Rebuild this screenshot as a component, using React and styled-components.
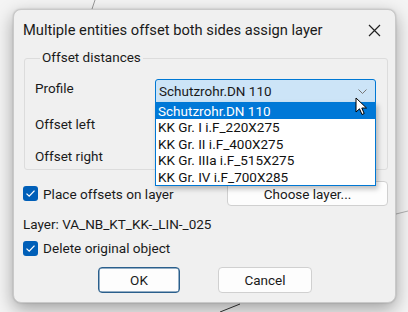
import React from "react";
import styled, { createGlobalStyle } from "styled-components";

const GlobalStyle = createGlobalStyle`
  html, body {
    margin: 0;
    padding: 0;
    background: #f4f4f4;
    font-family: Roboto, "Noto Sans", sans-serif;
    color: #1a1a1a;
  }
`;

const Page = styled.div`
  position: relative;
  width: 408px;
  height: 312px;
  overflow: hidden;
  padding: 9px 0 0 13px;
  box-sizing: border-box;
`;

const BackLines = styled.svg`
  position: absolute;
  left: 0;
  top: 0;
  pointer-events: none;
`;

const Dialog = styled.div`
  position: relative;
  width: 383px;
  height: 294px;
  box-sizing: border-box;
  background: #f0f0f0;
  border: 1px solid #c9c9c9;
  border-radius: 8px;
  box-shadow: 0 6px 18px rgba(0, 0, 0, 0.35), 0 0 2px rgba(0, 0, 0, 0.2);
  display: flex;
  flex-direction: column;
`;

const TitleBar = styled.div`
  height: 40px;
  display: flex;
  align-items: center;
  justify-content: space-between;
  padding: 0 14px 0 9px;
  font-size: 14.7px;
`;

const Body = styled.div`
  padding: 0 7px 0 9px;
  display: flex;
  flex-direction: column;
  font-size: 13.5px;
`;

const Group = styled.fieldset`
  margin: 0 0 0 1px;
  padding: 8px 0 0 10px;
  height: 120px;
  box-sizing: border-box;
  border: 1px solid #dcdcdc;
  border-radius: 3px;
  width: 364px;
`;

const Legend = styled.legend`
  padding: 0 2px;
  margin-left: 5px;
  font-size: 13.5px;
  position: relative;
  top: -1px;
`;

const FieldRow = styled.div`
  display: flex;
  align-items: center;
  height: 32px;
`;

const FieldLabel = styled.div`
  width: 120px;
  margin-top: ${(p) => p.$mt || 0}px;
`;

const Combo = styled.div`
  position: relative;
  width: 221px;
  height: 24px;
  margin-top: 2px;
  box-sizing: border-box;
  border: 1px solid #0078d4;
  border-radius: 3px 3px 0 0;
  background: #cce4f7;
  display: flex;
  align-items: center;
  justify-content: space-between;
  padding: 0 8px 0 3px;
`;

const DropList = styled.div`
  position: absolute;
  left: -1px;
  top: 22px;
  width: 221px;
  box-sizing: border-box;
  background: #fff;
  border: 1px solid #0078d4;
  box-shadow: 2px 3px 5px rgba(0, 0, 0, 0.25);
  z-index: 5;
`;

const DropItem = styled.div`
  height: 16.4px;
  line-height: 16.4px;
  overflow: hidden;
  padding-left: 2px;
  font-size: 13.5px;
  background: ${(p) => (p.$active ? "#0078d7" : "transparent")};
  color: ${(p) => (p.$active ? "#fff" : "#111")};
`;

const CheckRow = styled.div`
  display: flex;
  align-items: center;
  justify-content: space-between;
  margin-top: ${(p) => p.$mt || 0}px;
`;

const CheckLabel = styled.label`
  display: flex;
  align-items: center;
  gap: 5px;
  font-size: 13.6px;
`;

const Box = styled.span`
  width: 15px;
  height: 15px;
  border-radius: 3px;
  background: #005fb8;
  display: inline-flex;
  align-items: center;
  justify-content: center;
`;

const Button = styled.button`
  font-family: inherit;
  font-size: 13.5px;
  color: #1a1a1a;
  background: #fdfdfd;
  border: 1px solid ${(p) => (p.$default ? "#2a5f8c" : "#d0d0d0")};
  border-radius: 4px;
  height: ${(p) => p.$h || 25}px;
  width: ${(p) => p.$w}px;
  padding: 0;
  box-shadow: ${(p) => (p.$default ? "inset 0 0 0 0.5px #2a5f8c" : "none")};
`;

const InfoText = styled.div`
  margin-top: 10px;
  font-size: 13.5px;
`;

const ButtonBar = styled.div`
  display: flex;
  gap: 38px;
  margin: 11px 0 0 75px;
`;

const Cursor = styled.svg`
  position: absolute;
  left: 355px;
  top: 97px;
  z-index: 10;
`;

const Check = () => (
  <svg width="11" height="9" viewBox="0 0 11 9">
    <path d="M1.5 4.6 L4.2 7.2 L9.5 1.6" fill="none" stroke="#fff" strokeWidth="1.3" />
  </svg>
);

const profiles = [
  "Schutzrohr.DN 110",
  "KK Gr. I i.F_220X275",
  "KK Gr. II i.F_400X275",
  "KK Gr. IIIa i.F_515X275",
  "KK Gr. IV i.F_700X285",
];

export default function App() {
  return (
    <Page>
      <GlobalStyle />
      <BackLines width="408" height="312">
        <line x1="95" y1="0" x2="91" y2="12" stroke="#9a9a9a" strokeWidth="1" />
        <line x1="396" y1="214" x2="408" y2="211" stroke="#b0b0b0" strokeWidth="1" />
        <line x1="220" y1="312" x2="240" y2="304" stroke="#333" strokeWidth="1" />
      </BackLines>
      <Dialog>
        <TitleBar>
          <span>Multiple entities offset both sides assign layer</span>
          <svg width="13" height="13" viewBox="0 0 13 13">
            <path d="M1 1 L12 12 M12 1 L1 12" stroke="#222" strokeWidth="1.2" />
          </svg>
        </TitleBar>
        <Body>
          <Group>
            <Legend>Offset distances</Legend>
            <FieldRow>
              <FieldLabel $mt={-4}>Profile</FieldLabel>
              <Combo>
                <span>Schutzrohr.DN 110</span>
                <svg width="9" height="5" viewBox="0 0 9 5">
                  <path d="M0.5 0.5 L4.5 4.5 L8.5 0.5" fill="none" stroke="#777" strokeWidth="1" />
                </svg>
                <DropList>
                  {profiles.map((p, i) => (
                    <DropItem key={p} $active={i === 0}>
                      {p}
                    </DropItem>
                  ))}
                </DropList>
              </Combo>
            </FieldRow>
            <FieldRow>
              <FieldLabel $mt={3}>Offset left</FieldLabel>
            </FieldRow>
            <FieldRow>
              <FieldLabel $mt={3}>Offset right</FieldLabel>
            </FieldRow>
          </Group>
          <CheckRow $mt={11}>
            <CheckLabel>
              <Box>
                <Check />
              </Box>
              Place offsets on layer
            </CheckLabel>
            <Button $w={161} $h={25}>Choose layer...</Button>
          </CheckRow>
          <InfoText>Layer: VA_NB_KT_KK-_LIN-_025</InfoText>
          <CheckRow $mt={8}>
            <CheckLabel>
              <Box>
                <Check />
              </Box>
              Delete original object
            </CheckLabel>
          </CheckRow>
          <ButtonBar>
            <Button $default $w={82} $h={26}>OK</Button>
            <Button $w={94} $h={26}>Cancel</Button>
          </ButtonBar>
        </Body>
      </Dialog>
      <Cursor width="13" height="19" viewBox="0 0 13 19">
        <path d="M1 1 L1 15 L4.5 11.8 L7 17.5 L9.2 16.5 L6.8 11 L11.5 11 Z" fill="#fff" stroke="#000" strokeWidth="1" strokeLinejoin="round" />
      </Cursor>
    </Page>
  );
}
